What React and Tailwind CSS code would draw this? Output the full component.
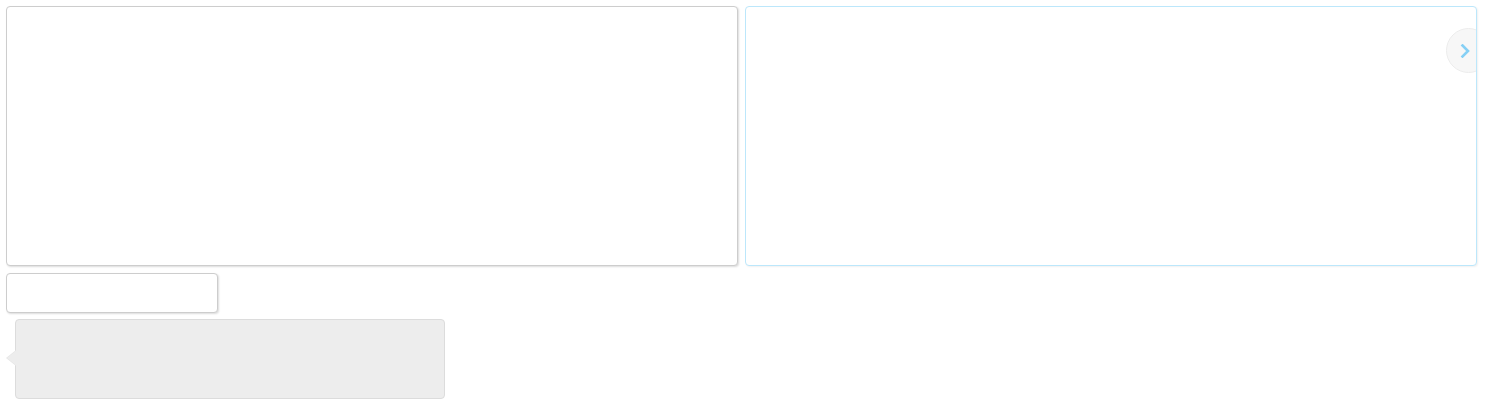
import React from 'react';

const App = () => {
  return (
    <div className="min-h-screen bg-white p-[6px] font-['Liberation_Sans',sans-serif]">
      <div className="flex gap-[7px]">
        <div className="h-[260px] w-[732px] rounded-[4px] border border-[#cdcdcd] bg-white shadow-[1px_1px_2px_rgba(0,0,0,0.14)]" />
        <div className="relative h-[260px] w-[732px] overflow-hidden rounded-[4px] border border-[#bce7fb] bg-white shadow-[1px_1px_2px_rgba(0,0,0,0.06)]">
          <button className="absolute right-[-15px] top-[21px] flex h-[45px] w-[45px] items-center rounded-full border border-[#ececec] bg-[#f7f7f7] pl-[13px]">
            <svg width="11" height="14" viewBox="0 0 11 14" fill="none">
              <path d="M2.5 1.5 L8 7 L2.5 12.5" stroke="#86d0f5" strokeWidth="2.6" strokeLinecap="square" />
            </svg>
          </button>
        </div>
      </div>

      <div className="mt-[7px] h-[40px] w-[212px] rounded-[4px] border border-[#cdcdcd] bg-white shadow-[1px_1px_2px_rgba(0,0,0,0.14)]" />

      <div className="relative ml-[9px] mt-[6px] h-[80px] w-[430px] rounded-[4px] border border-[#dcdcdc] bg-[#ededed]">
        <div className="absolute left-[-10px] top-[30px] h-0 w-0 border-y-[8px] border-r-[10px] border-y-transparent border-r-[#e6e6e6]" />
        <div className="absolute left-[-9px] top-[30px] h-0 w-0 border-y-[8px] border-r-[10px] border-y-transparent border-r-[#ededed]" />
      </div>
    </div>
  );
};

export default App;
